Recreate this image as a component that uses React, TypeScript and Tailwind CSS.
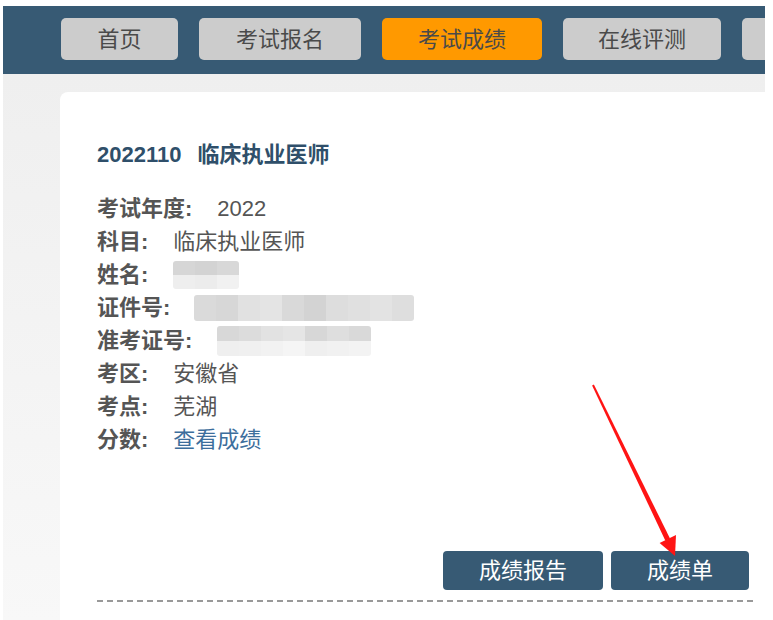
import React from 'react';

const navItems = [
  { label: '首页', cls: 'w-[117px] bg-[#cccccc]' },
  { label: '考试报名', cls: 'w-[162px] bg-[#cccccc]' },
  { label: '考试成绩', cls: 'w-[160px] bg-[#ff9900]' },
  { label: '在线评测', cls: 'w-[158px] bg-[#cccccc]' },
  { label: '', cls: 'w-[160px] bg-[#cccccc]' },
];

// mosaic cells for the blurred personal fields
const nameCells = [
  ['#d6d6d6', '#d3d3d3', '#d8d8d8'],
  ['#eeeeee', '#ececec', '#f1f1f1'],
];
const idCells = [['#dadada', '#d7d7d7', '#e1e1e1', '#e4e4e4', '#d9d9d9', '#d3d3d3', '#dddddd', '#e0e0e0', '#e3e3e3', '#dedede']];
const ticketCells = [
  ['#d8d8d8', '#dcdcdc', '#e2e2e2', '#e5e5e5', '#d7d7d7', '#dedede', '#d9d9d9'],
  ['#efefef', '#f0f0f0', '#f2f2f2', '#f5f5f5', '#efefef', '#f1f1f1', '#f3f3f3'],
];

function Mosaic({ rows, cellH }: { rows: string[][]; cellH: string }) {
  return (
    <div className="flex flex-col overflow-hidden rounded-[3px] blur-[0.6px]">
      {rows.map((row, i) => (
        <div key={i} className="flex">
          {row.map((c, j) => (
            <div key={j} className={`w-[22px] ${cellH}`} style={{ backgroundColor: c }} />
          ))}
        </div>
      ))}
    </div>
  );
}

function Row({ label, children }: { label: string; children: React.ReactNode }) {
  return (
    <div className="flex h-[33px] items-center">
      <span className="font-bold text-[#555555]">{label}</span>
      <div className="ml-[25px] flex items-center">{children}</div>
    </div>
  );
}

export default function App() {
  return (
    <div
      className="relative h-[620px] w-[773px] overflow-hidden bg-white text-[22px]"
      style={{ fontFamily: '"Liberation Sans", "Noto Sans CJK SC", sans-serif' }}
    >
      <div className="ml-[3px] mt-[6px] w-[762px] overflow-hidden">
        {/* Header nav */}
        <div className="flex h-[68px] gap-[21px] overflow-hidden bg-[#375a74] pl-[58px] pt-[12px]">
          {navItems.map((item, i) => (
            <div
              key={i}
              className={`flex h-[42px] shrink-0 items-center justify-center rounded-[5px] text-[#4a4a4a] ${item.cls}`}
            >
              {item.label}
            </div>
          ))}
        </div>

        {/* Content */}
        <div className="h-[546px] bg-gradient-to-b from-[#efefef] to-[#f8f8f8] pl-[57px] pt-[18px]">
          <div className="h-full w-[760px] rounded-tl-[8px] bg-white pl-[37px] pt-[46px]">
            <div className="flex h-[33px] items-center font-bold text-[#2f4f6a]">
              <span>2022110</span>
              <span className="ml-[16px]">临床执业医师</span>
            </div>

            <div className="mt-[21px] flex flex-col text-[#555555]">
              <Row label="考试年度:">2022</Row>
              <Row label="科目:">临床执业医师</Row>
              <Row label="姓名:">
                <Mosaic rows={nameCells} cellH="h-[14px]" />
              </Row>
              <Row label="证件号:">
                <div className="-ml-px">
                  <Mosaic rows={idCells} cellH="h-[26px]" />
                </div>
              </Row>
              <Row label="准考证号:">
                <Mosaic rows={ticketCells} cellH="h-[15px]" />
              </Row>
              <Row label="考区:">安徽省</Row>
              <Row label="考点:">芜湖</Row>
              <Row label="分数:">
                <span className="text-[#3d6e9c]">查看成绩</span>
              </Row>
            </div>

            <div className="mt-[95px] w-[656px]">
              <div className="flex justify-end gap-[8px] pr-[4px]">
                <button className="flex h-[39px] w-[160px] items-center justify-center rounded-[4px] bg-[#375a74] text-white">
                  成绩报告
                </button>
                <button className="flex h-[39px] w-[138px] items-center justify-center rounded-[4px] bg-[#375a74] text-white">
                  成绩单
                </button>
              </div>
              <div className="mt-[10px] h-[2px] bg-[repeating-linear-gradient(90deg,#999999_0_6px,transparent_6px_10px)]" />
            </div>
          </div>
        </div>
      </div>

      {/* red annotation arrow */}
      <svg className="pointer-events-none absolute left-0 top-0" width="773" height="620" viewBox="0 0 773 620">
        <polygon points="592.1,385.4 593.9,384.6 670,538.5 665.4,540.7" fill="#ff1414" />
        <polygon points="675,556 676,535 659.6,543" fill="#ff1414" />
      </svg>
    </div>
  );
}
